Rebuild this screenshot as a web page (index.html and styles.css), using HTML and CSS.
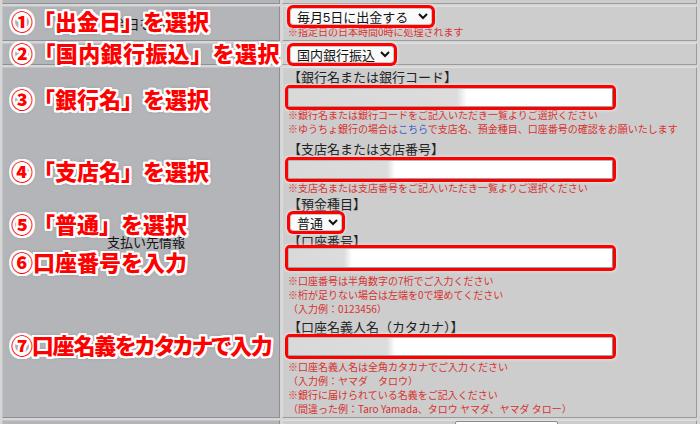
FILE: index.html
```html
<!DOCTYPE html>
<html lang="ja">
<head>
<meta charset="utf-8">
<title>支払い先情報</title>
<link rel="stylesheet" href="styles.css">
</head>
<body>
<div class="page">
  <table class="form">
    <tr class="r-top"><td class="lbl"></td><td class="fld"></td></tr>
    <tr>
      <th class="lbl">出金日を利用で</th>
      <td class="fld">
        <div class="cell">
          <select class="sel sel-date mt1"><option>毎月5日に出金する</option></select>
          <p class="note">※指定日の日本時間0時に処理されます</p>
        </div>
      </td>
    </tr>
    <tr>
      <th class="lbl"></th>
      <td class="fld">
        <div class="cell">
          <select class="sel sel-method mt2"><option>国内銀行振込</option></select>
        </div>
      </td>
    </tr>
    <tr>
      <th class="lbl lbl-main">支払い先情報</th>
      <td class="fld">
        <div class="cell">
          <div class="flabel">【銀行名または銀行コード】</div>
          <input class="txt blur-l mt3" type="text" readonly>
          <div class="notes mt1">
            <p class="note">※銀行名または銀行コードをご記入いただき一覧よりご選択ください</p>
            <p class="note">※ゆうちょ銀行の場合は<span class="link">こちら</span>で支店名、預金種目、口座番号の確認をお願いたします</p>
          </div>
          <div class="flabel mt4">【支店名または支店番号】</div>
          <input class="txt blur-m mt3" type="text" readonly>
          <div class="notes mt2">
            <p class="note">※支店名または支店番号をご記入いただき一覧よりご選択ください</p>
          </div>
          <div class="flabel">【預金種目】</div>
          <select class="sel sel-kind mt2"><option>普通</option></select>
          <div class="flabel short mt3">【口座番号】</div>
          <input class="txt tall blur-s" type="text" readonly>
          <div class="notes mt6">
            <p class="note">※口座番号は半角数字の7桁でご入力ください</p>
            <p class="note">※桁が足りない場合は左端を0で埋めてください</p>
            <p class="note">（入力例：0123456）</p>
          </div>
          <div class="flabel mt2">【口座名義人名（カタカナ）】</div>
          <input class="txt blur-m mt2" type="text" readonly>
          <div class="notes mt4">
            <p class="note">※口座名義人名は全角カタカナでご入力ください</p>
            <p class="note">（入力例：ヤマダ　タロウ）</p>
            <p class="note">※銀行に届けられている名義をご記入ください</p>
            <p class="note">（間違った例：Taro Yamada、タロウ ヤマダ、ヤマダ タロー）</p>
          </div>
        </div>
      </td>
    </tr>
    <tr>
      <th class="lbl">出金額</th>
      <td class="fld">
        <div class="cell-row">
          <span class="row-text">出金金額</span>
          <input class="txt small" type="text" readonly>
        </div>
      </td>
    </tr>
  </table>

  <div class="callout c1">①「出金日」を選択</div>
  <div class="callout c2">②「国内銀行振込」を選択</div>
  <div class="callout c3">③「銀行名」を選択</div>
  <div class="callout c4">④「支店名」を選択</div>
  <div class="callout c5">⑤「普通」を選択</div>
  <div class="callout c6">⑥口座番号を入力</div>
  <div class="callout c7">⑦口座名義をカタカナで入力</div>
</div>
</body>
</html>
```

FILE: styles.css
```css
html, body {
  margin: 0;
  padding: 0;
  overflow: hidden;
  background: #d6d6d6;
}
body {
  width: 700px;
  height: 424px;
  font-family: "Noto Sans CJK JP", "Noto Sans", sans-serif;
  color: #222;
}
.page {
  position: relative;
  width: 700px;
  height: 424px;
  overflow: hidden;
}

/* table */
.form {
  border-collapse: separate;
  border-spacing: 2px;
  width: 699px;
  margin-top: -12px;
  background: #d6d6d6;
}
.form td, .form th {
  padding: 0;
  border: 1px solid;
  border-color: #e0e0e0 #9b9b9b #9b9b9b #dcdcdc;
  vertical-align: top;
}
.r-top td { height: 12px; }
.lbl {
  width: 266px;
  padding: 0 0 0 10px !important;
  background: #b4b5b9;
  vertical-align: middle !important;
  text-align: center;
  font-size: 13px;
  font-weight: normal;
  color: #111;
  border-color: #c4c5c8 #8f9094 #8f9094 #c4c5c8 !important;
}
.lbl.lbl-main { padding-bottom: 3px !important; }
.fld {
  background: #cdcdcd;
}
.cell {
  display: flex;
  flex-direction: column;
  align-items: flex-start;
  padding: 0 0 1px 5px;
}
.cell-row {
  display: flex;
  align-items: flex-start;
  gap: 53px;
  padding: 0 0 0 67px;
  height: 22px;
}
.row-text {
  font-size: 13px;
  line-height: 17px;
}

/* field labels & notes */
.flabel {
  font-size: 13px;
  line-height: 17px;
  color: #222;
  white-space: nowrap;
}
.flabel.short { line-height: 14px; }
.notes { display: flex; flex-direction: column; }
.note {
  margin: 0;
  font-size: 10px;
  line-height: 14px;
  color: #d8312f;
  white-space: nowrap;
}
.link { color: #3a62c8; }

/* spacing utilities */
.mt1 { margin-top: 1px; }
.mt2 { margin-top: 2px; }
.mt3 { margin-top: 3px; }
.mt4 { margin-top: 4px; }
.mt6 { margin-top: 6px; }

/* controls */
.sel {
  position: relative;
  z-index: 1;
  box-sizing: border-box;
  height: 17px;
  margin-left: 2px;
  padding: 0 0 0 2px;
  font-family: "Liberation Sans", "Noto Sans CJK JP", sans-serif;
  font-size: 13px;
  color: #111;
  background: #fafafa;
  border: 1px solid #c8c8c8;
  border-radius: 3px;
  box-shadow: 0 0 0 3px #f00, 0 0 3px 4px rgba(255, 255, 255, 0.45);
}
.sel-date { width: 142px; }
.sel-method { width: 104px; }
.sel-kind { width: 52px; }

.txt {
  position: relative;
  z-index: 1;
  box-sizing: border-box;
  width: 325px;
  height: 19px;
  margin-left: 0;
  padding: 0;
  border: 1px solid #b5b5b5;
  border-right-color: #8a8a8a;
  border-bottom-color: #a0a0a0;
  border-radius: 2px;
  background: #fff;
  box-shadow: 0 0 0 3px #f00, 0 0 3px 4px rgba(255, 255, 255, 0.45);
  outline: none;
}
.txt.tall { height: 20px; }
.txt.small {
  width: 103px;
  height: 20px;
  box-shadow: none;
  border: 1px solid #8a8a8a;
}
.blur-l { background: linear-gradient(90deg, #d9d9d9 0, #dcdcdc 168px, #fff 178px); }
.blur-m { background: linear-gradient(90deg, #d9d9d9 0, #dcdcdc 98px, #fff 106px); }
.blur-s { background: linear-gradient(90deg, #d9d9d9 0, #dcdcdc 55px, #fff 63px); }

/* callout annotations over the form */
.callout {
  position: absolute;
  z-index: 5;
  left: 11px;
  font-family: "Noto Sans CJK JP", "Noto Sans", sans-serif;
  font-size: 22px;
  line-height: 22px;
  font-weight: 900;
  color: #f00;
  white-space: nowrap;
  text-shadow:
    2px 0 #fff, -2px 0 #fff, 0 2px #fff, 0 -2px #fff,
    2px 2px #fff, -2px -2px #fff, 2px -2px #fff, -2px 2px #fff,
    1px 2px #fff, -1px 2px #fff, 2px 1px #fff, -2px 1px #fff,
    1px -2px #fff, -1px -2px #fff, 2px -1px #fff, -2px -1px #fff,
    0 0 4px rgba(80, 80, 80, 0.7);
}
.c1 { top: 9px; }
.c2 { top: 41px; letter-spacing: 0.4px; }
.c3 { top: 87px; }
.c4 { top: 159px; }
.c5 { top: 212px; }
.c6 { top: 250px; }
.c7 { top: 333px; font-feature-settings: "palt"; letter-spacing: -1.2px; }
```
